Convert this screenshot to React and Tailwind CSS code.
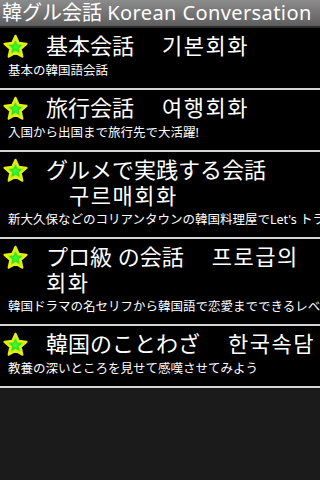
import React from "react";

function Star() {
  const pts = "12,1.8 15.06,8.59 22.46,9.4 16.95,14.41 18.47,21.7 12,18 5.53,21.7 7.05,14.41 1.54,9.4 8.94,8.59";
  return (
    <svg width="25" height="25" viewBox="0 0 24 24" className="shrink-0">
      <defs>
        <radialGradient id="g1" cx="50%" cy="55%" r="55%">
          <stop offset="0%" stopColor="#f4ff30" />
          <stop offset="100%" stopColor="#d8e600" />
        </radialGradient>
        <radialGradient id="g2" cx="50%" cy="50%" r="60%">
          <stop offset="0%" stopColor="#40ff30" />
          <stop offset="100%" stopColor="#22d81a" />
        </radialGradient>
      </defs>
      <polygon points={pts} fill="url(#g1)" stroke="#e6ee10" strokeWidth="2.2" strokeLinejoin="round" />
      <g transform="translate(12 12.6) scale(0.7) translate(-12 -12.6)">
        <polygon points={pts} fill="#b8f018" stroke="#b8f018" strokeWidth="1.5" strokeLinejoin="round" />
      </g>
      <g transform="translate(12 12.8) scale(0.54) translate(-12 -12.8)">
        <polygon points={pts} fill="url(#g2)" stroke="#2ee020" strokeWidth="1.5" strokeLinejoin="round" />
      </g>
    </svg>
  );
}

const rows = [
  { jp: "基本会話", ko: "기본회화", sub: "基本の韓国語会話" },
  { jp: "旅行会話", ko: "여행회화", sub: "入国から出国まで旅行先で大活躍!" },
  { jp: "グルメで実践する会話", ko2: "구르매회화", indent: true, sub: "新大久保などのコリアンタウンの韓国料理屋でLet's トライ！" },
  { jp: "プロ級 の会話", ko: "프로급의", ko2: "회화", sub: "韓国ドラマの名セリフから韓国語で恋愛までできるレベルを目指そう" },
  { jp: "韓国のことわざ", ko: "한국속담", sub: "教養の深いところを見せて感嘆させてみよう" },
];

export default function App() {
  return (
    <div
      className="w-[320px] h-[480px] overflow-hidden bg-[#1b1b1b] text-white"
      style={{ fontFamily: "'Noto Sans', 'Noto Sans CJK JP', 'Noto Sans CJK KR', sans-serif" }}
    >
      <div className="h-[26px] bg-gradient-to-b from-[#8c8c8c] to-[#5e5e5e] pl-[2px] text-[20px] leading-[26px] whitespace-nowrap overflow-hidden">
        韓グル会話 <span className="tracking-[0.4px]">Korean Conversation</span>
      </div>
      <div className="h-[2px] bg-[#2a2a2a]" />
      {rows.map((r, i) => (
        <div key={i}>
          <div className="bg-black pt-[4px] pb-[8px] overflow-hidden">
            <div className="flex">
              <div className="ml-[3px] mt-[2px]">
                <Star />
              </div>
              <div className="ml-[18px] text-[22px] leading-[27px] whitespace-nowrap">
                <div>
                  <span>{r.jp}</span>
                  {r.ko && <span className="ml-[28px] tracking-[1.5px]">{r.ko}</span>}
                </div>
                {r.ko2 && (
                  <div className={r.indent ? "pl-[23px] tracking-[1.5px] leading-[25px]" : "tracking-[1.5px] leading-[25px]"}>{r.ko2}</div>
                )}
              </div>
            </div>
            <div className="pl-[8px] mt-[3px] text-[12.5px] leading-[18px] whitespace-nowrap">{r.sub}</div>
          </div>
          <div className="h-[2px] bg-[#d4d4d4]" />
        </div>
      ))}
    </div>
  );
}
